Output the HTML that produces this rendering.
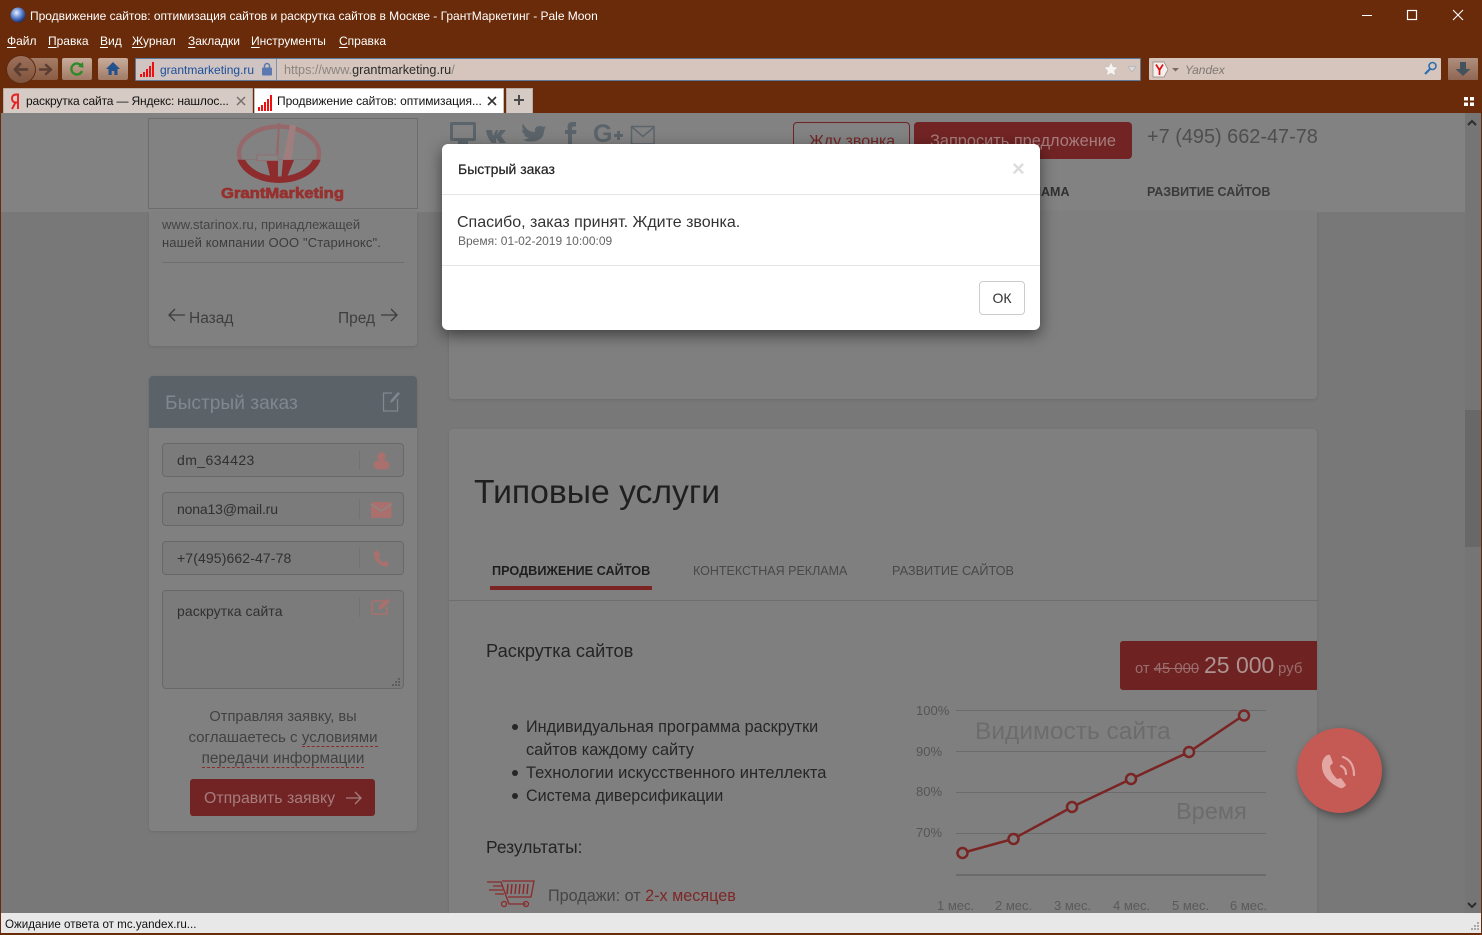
<!DOCTYPE html>
<html lang="ru"><head><meta charset="utf-8"><title>Продвижение сайтов</title>
<style>
*{box-sizing:border-box}
html,body{margin:0;padding:0;width:1482px;height:934px;overflow:hidden;background:#692b09;font-family:"Liberation Sans","Noto Sans CJK JP",sans-serif}
.a{position:absolute}
.t{position:absolute;white-space:nowrap;line-height:20px}
u{text-decoration-thickness:1px;text-underline-offset:2px}
svg{position:absolute;overflow:visible}
</style></head><body>
<!-- chrome -->
<svg style="left:10px;top:7px" width="16" height="16"><defs><radialGradient id="m" cx=".4" cy=".35" r=".7"><stop offset="0" stop-color="#e8f0ff"/><stop offset=".5" stop-color="#5e86d0"/><stop offset="1" stop-color="#12246a"/></radialGradient></defs><circle cx="8" cy="8" r="7.5" fill="url(#m)"/></svg>
<div class="t" style="left:30px;top:6px;font-size:12px;letter-spacing:-.02px;color:#fff">Продвижение сайтов: оптимизация сайтов и раскрутка сайтов в Москве - ГрантМаркетинг - Pale Moon</div>
<svg style="left:1360px;top:8px" width="110" height="16" fill="none" stroke="#fff"><path d="M2 7.5h10" stroke-width="1"/><rect x="47.500" y="2.500" width="9" height="9" stroke-width="1.200"/><path d="M93 2l10 10M103 2l-10 10" stroke-width="1.100"/></svg>
<div class="t" style="left:7px;top:31px;font-size:12px;color:#fff"><u>Ф</u>айл</div>
<div class="t" style="left:48px;top:31px;font-size:12px;color:#fff"><u>П</u>равка</div>
<div class="t" style="left:100px;top:31px;font-size:12px;color:#fff"><u>В</u>ид</div>
<div class="t" style="left:132px;top:31px;font-size:12px;color:#fff"><u>Ж</u>урнал</div>
<div class="t" style="left:188px;top:31px;font-size:12px;color:#fff"><u>З</u>акладки</div>
<div class="t" style="left:251px;top:31px;font-size:12px;color:#fff"><u>И</u>нструменты</div>
<div class="t" style="left:339px;top:31px;font-size:12px;color:#fff"><u>С</u>правка</div>
<!-- nav -->
<div class="a" style="left:30px;top:58px;width:28px;height:22px;background:linear-gradient(#a57c66,#8a5c43);border-radius:0 2px 2px 0"></div>
<div class="a" style="left:6px;top:55px;width:30px;height:29px;border-radius:50%;background:linear-gradient(#9c705a,#80543c);border:1px solid #5c2a10"></div>
<svg style="left:6px;top:55px" width="54" height="29" fill="none" stroke-linecap="round" stroke-linejoin="round"><path d="M21 14.500h-12M14 9l-5 5.500 5 5.500" stroke="#5b3e33" stroke-width="2.800"/><path d="M34 14.500h10M40 10l5 4.500-5 4.500" stroke="#5b3e33" stroke-width="2.500"/></svg>
<div class="a" style="left:62px;top:58px;width:30px;height:22px;background:linear-gradient(#c9ac9c,#a07a64);border-radius:2px"></div>
<svg style="left:69px;top:61px" width="16" height="16" fill="none"><path d="M12.500 5A5.500 5.500 0 1 0 13 10" stroke="#2f8a2c" stroke-width="2.400"/><path d="M9 5.500l5.500 1.500L14 1z" fill="#2f8a2c"/></svg>
<div class="a" style="left:98px;top:58px;width:30px;height:22px;background:linear-gradient(#c9ac9c,#a07a64);border-radius:2px"></div>
<svg style="left:105px;top:61px" width="16" height="16"><path d="M8 1L1 8h2.500v6h3.200v-4h2.600v4h3.200V8H15z" fill="#23528f"/></svg>
<div class="a" style="left:135px;top:58px;width:1006px;height:23px;background:#d5c5bd;border:1px solid #5d7898;border-radius:1px"></div>
<div class="a" style="left:136px;top:59px;width:141px;height:21px;background:#cfc4c2;border-right:1px solid #7a93ae"></div>
<svg style="left:140px;top:61px" width="16" height="17" fill="#ee1010"><rect x="0" y="13" width="2" height="3"/><rect x="3" y="11" width="2" height="5"/><rect x="6" y="8" width="2" height="8"/><rect x="9" y="5" width="2" height="11"/><rect x="12" y="1" width="2" height="15"/></svg>
<div class="t" style="left:160px;top:60px;font-size:12px;color:#1a4f9c">grantmarketing.ru</div>
<svg style="left:261px;top:62px" width="12" height="14"><rect x="1" y="5.500" width="10" height="8" rx="1" fill="#5b78b0"/><path d="M3.500 6V4a2.500 2.500 0 0 1 5 0v2" fill="none" stroke="#5b78b0" stroke-width="1.500"/></svg>
<div class="t" style="left:284px;top:60px;font-size:12.650px;color:#8b8580">https://www.<span style="color:#2a2a2a">grantmarketing.ru</span>/</div>
<svg style="left:1103px;top:61px" width="34" height="16"><path d="M8 1l2.200 4.700 5 .6-3.700 3.400 1 5L8 12.200 3.500 14.700l1-5L.8 6.300l5-.6z" fill="#f6f3f0" stroke="#c8c0ba" stroke-width=".6"/><path d="M25 5.500h8l-4 5.500z" fill="#e2dad6" stroke="#aab5bf" stroke-width=".7"/></svg>
<div class="a" style="left:1149px;top:58px;width:292px;height:22px;background:#d5c5bd;border-radius:1px"></div>
<svg style="left:1153px;top:61px" width="30" height="17"><path d="M0 1h11l4 7.500-4 7.500H0z" fill="#f5f0ee" stroke="#8d8078" stroke-width=".7"/><path d="M3 3.500l3.500 5.500v5M10 3.500L6.500 9" stroke="#e01010" stroke-width="1.700" fill="none"/><path d="M19 7h7l-3.500 3.500z" fill="#756a64"/></svg>
<div class="t" style="left:1185px;top:60px;font-size:12px;font-style:italic;color:#7f7873">Yandex</div>
<svg style="left:1423px;top:61px" width="15" height="15" fill="none" stroke="#2c6fb0"><circle cx="9.500" cy="5" r="3.500" stroke-width="1.600"/><path d="M7 8L2 13" stroke-width="2.200"/></svg>
<div class="a" style="left:1448px;top:58px;width:30px;height:22px;background:linear-gradient(#b08f7e,#8f6652);border-radius:1px"></div>
<svg style="left:1454px;top:61px" width="18" height="17"><path d="M6 1h6v7h4.500L9 15 1.500 8H6z" fill="#44525e"/></svg>
<!-- tabs -->
<div class="a" style="left:3px;top:88px;width:250px;height:25px;background:#d6cac4;border:1px solid #b9aaa2;border-bottom:0;border-radius:1px 1px 0 0"></div>
<svg style="left:10px;top:93px" width="11" height="17" fill="none" stroke="#e82020" stroke-width="1.900"><path d="M8 16V1.500H6Q2 1.500 2 5.500T6 9.500H8M5.500 9.500L2 16"/></svg>
<div class="t" style="left:26px;top:91px;font-size:12px;letter-spacing:-.15px;color:#111">раскрутка сайта — Яндекс: нашлос...</div>
<svg style="left:236px;top:96px" width="10" height="10" stroke="#77706c" stroke-width="1.500"><path d="M1 1l8 8M9 1l-8 8"/></svg>
<div class="a" style="left:254px;top:88px;width:250px;height:26px;background:#fff;border:1px solid #c7bdb8;border-bottom:0;border-radius:1px 1px 0 0"></div>
<svg style="left:258px;top:95px" width="16" height="17" fill="#ee1010"><rect x="0" y="12" width="2" height="4"/><rect x="3" y="10" width="2" height="6"/><rect x="6" y="7" width="2" height="9"/><rect x="9" y="4" width="2" height="12"/><rect x="12" y="0" width="2" height="16"/></svg>
<div class="t" style="left:277px;top:91px;font-size:12px;letter-spacing:-.06px;color:#111">Продвижение сайтов: оптимизация...</div>
<svg style="left:487px;top:96px" width="10" height="10" stroke="#333" stroke-width="1.600"><path d="M1 1l8 8M9 1l-8 8"/></svg>
<div class="a" style="left:506px;top:88px;width:27px;height:25px;background:#d6cac4;border:1px solid #b9aaa2;border-bottom:0"></div>
<svg style="left:513px;top:94px" width="12" height="12" stroke="#4a4a4a" stroke-width="2"><path d="M6 1v10M1 6h10"/></svg>
<svg style="left:1464px;top:97px" width="10" height="10" fill="#fff"><rect x="0" y="0" width="4" height="3.500"/><rect x="6" y="0" width="4" height="3.500"/><rect x="0" y="5.500" width="4" height="3.500"/><rect x="6" y="5.500" width="4" height="3.500"/></svg>

<!-- page -->
<div class="a" style="left:1px;top:113px;width:1480px;height:800px;background:#787878;overflow:hidden">
  <div class="a" style="left:0;top:0;width:1464px;height:99px;background:#828282"></div>
  <div class="a" style="left:448px;top:99px;width:868px;height:187px;background:#7f7f7f;border-radius:0 0 4px 4px;box-shadow:0 1px 3px rgba(0,0,0,.1)"></div>
  <div class="a" style="left:148px;top:99px;width:268px;height:134px;background:#808080;border-radius:0 0 4px 4px;box-shadow:0 1px 3px rgba(0,0,0,.1)"></div>
  <div class="a" style="left:148px;top:263px;width:268px;height:455px;background:#808080;border-radius:4px;box-shadow:0 1px 3px rgba(0,0,0,.1)"></div>
  <div class="a" style="left:448px;top:316px;width:868px;height:484px;background:#7f7f7f;border-radius:4px 4px 0 0;box-shadow:0 1px 3px rgba(0,0,0,.1)"></div>
  <div class="a" style="left:1464px;top:0;width:16px;height:800px;background:#757575"></div>
  <div class="a" style="left:1464px;top:297px;width:16px;height:137px;background:#686868"></div>
</div>
<svg style="left:1466px;top:118px" width="14" height="10" fill="none" stroke="#2c2c2c" stroke-width="2"><path d="M2 7l4-4 4 4"/></svg>
<svg style="left:1466px;top:900px" width="14" height="10" fill="none" stroke="#2c2c2c" stroke-width="2"><path d="M2 3l4 4 4-4"/></svg>

<!-- logo -->
<div class="a" style="left:148px;top:118px;width:270px;height:91px;border:1px solid #6c6c6c"></div>
<svg style="left:148px;top:118px" width="270" height="91">
<defs><clipPath id="top"><rect x="0" y="0" width="270" height="41.700"/></clipPath><clipPath id="bot"><rect x="0" y="41.700" width="270" height="50"/></clipPath></defs>
<ellipse cx="131" cy="35.500" rx="40" ry="27" fill="none" stroke="#96686a" stroke-width="4.500" clip-path="url(#top)"/>
<g clip-path="url(#bot)"><ellipse cx="131" cy="35.500" rx="42.500" ry="29.500" fill="#8e2b2d"/><ellipse cx="131" cy="33" rx="36" ry="25.500" fill="#828282"/></g>
<path d="M130 5l-2 31h2.500l1.500-31z" fill="#96686a"/>
<path d="M109 37h21v5.500H109z" fill="#858585" stroke="#96686a" stroke-width=".8"/>
<path d="M118.500 43H130v20.500l-7-1.500z" fill="#8e2b2d"/>
<path d="M142 6l6 2-4.500 33.700H135z" fill="#a07d7f"/>
<path d="M135 42h11L137 64h-4z" fill="#8e2b2d"/>
<text x="73" y="80" font-family="Liberation Sans" font-size="15" font-weight="bold" fill="#97312f" textLength="123" lengthAdjust="spacingAndGlyphs" stroke="#97312f" stroke-width=".7">GrantMarketing</text>
</svg>
<div class="t" style="left:162px;top:215px;font-size:13px;color:#444">www.starinox.ru, принадлежащей</div>
<div class="t" style="left:162px;top:233px;font-size:13px;letter-spacing:.13px;color:#3c3c3c">нашей компании ООО "Старинокс".</div>
<div class="a" style="left:162px;top:262px;width:242px;height:1px;background:#6e6e6e"></div>
<svg style="left:168px;top:306px" width="230" height="18" fill="none" stroke="#3c3c3c" stroke-width="1.300"><path d="M17 9H1M7 3L1 9l6 6"/><path d="M213 9h16M223 3l6 6-6 6"/></svg>
<div class="t" style="left:189px;top:309px;font-size:15.500px;color:#3e3e3e">Назад</div>
<div class="t" style="left:338px;top:309px;font-size:15.500px;color:#3e3e3e">Пред</div>

<!-- quick form -->
<div class="a" style="left:149px;top:376px;width:268px;height:52px;background:#5b6369;border-radius:4px 4px 0 0"></div>
<div class="t" style="left:165px;top:394px;font-size:19.200px;color:#7e888e">Быстрый заказ</div>
<svg style="left:382px;top:391px" width="18" height="21" fill="none" stroke="#80898f" stroke-width="1.300"><path d="M10 2H1.500v18h14V8"/><path d="M8 12l1-3 7-8 2 1.500-7 8z" fill="#80898f" stroke="none"/></svg>
<div class="a" style="left:162px;top:443px;width:242px;height:34px;background:#7b7b7b;border:1px solid #686868;border-radius:4px"></div>
<div class="a" style="left:162px;top:492px;width:242px;height:34px;background:#7b7b7b;border:1px solid #686868;border-radius:4px"></div>
<div class="a" style="left:162px;top:541px;width:242px;height:34px;background:#7b7b7b;border:1px solid #686868;border-radius:4px"></div>
<div class="a" style="left:162px;top:590px;width:242px;height:99px;background:#7b7b7b;border:1px solid #686868;border-radius:4px"></div>
<div class="a" style="left:359px;top:450px;width:1px;height:20px;background:#727272"></div>
<div class="a" style="left:359px;top:499px;width:1px;height:20px;background:#727272"></div>
<div class="a" style="left:359px;top:548px;width:1px;height:20px;background:#727272"></div>
<div class="a" style="left:359px;top:597px;width:1px;height:20px;background:#727272"></div>
<div class="t" style="left:177px;top:450px;font-size:14px;letter-spacing:.42px;color:#303030">dm_634423</div>
<div class="t" style="left:177px;top:499px;font-size:14px;letter-spacing:-.15px;color:#303030">nona13@mail.ru</div>
<div class="t" style="left:177px;top:548px;font-size:14px;letter-spacing:.12px;color:#303030">+7(495)662-47-78</div>
<div class="t" style="left:177px;top:601px;font-size:14px;letter-spacing:.07px;color:#303030">раскрутка сайта</div>
<svg style="left:373px;top:452px" width="17" height="18" fill="#aa706d"><circle cx="8.500" cy="4.500" r="4.300"/><rect x="0.500" y="8.500" width="16" height="9" rx="4.500"/></svg>
<svg style="left:371px;top:502px" width="21" height="16"><rect x="0" y="0" width="20.500" height="16" rx="1.500" fill="#aa706d"/><path d="M0 2l10.200 7L20.500 2" fill="none" stroke="#8a8a8a" stroke-width="1.300"/></svg>
<svg style="left:373px;top:550px" width="17" height="17"><path d="M1 3.500Q1 1.500 3 .700l1.500-.500 3 5-2 2q1.500 3.500 5 5.300l2-2 3.700 3.500q-1.500 3-4.500 2.500Q1 13 1 3.500z" fill="#aa706d"/></svg>
<svg style="left:371px;top:598px" width="21" height="18" fill="none" stroke="#aa706d" stroke-width="1.600"><path d="M13 3H3Q1 3 1 5v9q0 2 2 2h11q2 0 2-2V9"/><path d="M7 11l1-3 8-7.500 3 3L11 11z" fill="#aa706d" stroke="none"/></svg>
<svg style="left:392px;top:678px" width="10" height="9" fill="#5e5e5e"><rect x="6" y="0" width="2" height="2"/><rect x="3" y="3" width="2" height="2"/><rect x="6" y="3" width="2" height="2"/><rect x="0" y="6" width="2" height="2"/><rect x="3" y="6" width="2" height="2"/><rect x="6" y="6" width="2" height="2"/></svg>
<div class="t" style="left:149px;top:707px;width:268px;text-align:center;font-size:14.600px;color:#414141">Отправляя заявку, вы</div>
<div class="t" style="left:149px;top:728px;width:268px;text-align:center;font-size:15.100px;color:#414141">соглашаетесь с <span style="border-bottom:1px dashed #8a2a2a">условиями</span></div>
<div class="t" style="left:149px;top:749px;width:268px;text-align:center;font-size:15.300px;color:#414141"><span style="border-bottom:1px dashed #8a2a2a">передачи информации</span></div>
<div class="a" style="left:190px;top:779px;width:185px;height:37px;background:#722424;border-radius:3px"></div>
<div class="t" style="left:204px;top:789px;font-size:15.850px;color:#a67c7c">Отправить заявку</div>
<svg style="left:345px;top:790px" width="18" height="16" fill="none" stroke="#a67c7c" stroke-width="1.300"><path d="M1 8h15M10 2l6 6-6 6"/></svg>

<!-- header right -->
<svg style="left:450px;top:122px" width="205" height="24" fill="#5b646a">
<path d="M2 0h22q2 0 2 2v15q0 2-2 2H2q-2 0-2-2V2q0-2 2-2zM3 3v13h20V3z" fill-rule="evenodd"/><rect x="8" y="19" width="10" height="5"/>
<path d="M36 8h6l1 6 3-6h2l-1 5 3-5h6l-5 6 5 7h-6l-4-5v5h-4q-5-5-6-13z"/>
<path d="M73 9q3 4 9 4-1-6 5-6 2 0 3 1l3-1-2 3 2-.500-2 2q0 11-14 11-4 0-7-2 4 0 6-2-4 0-5-3h2q-4-1-4-5l2 .500q-3-3-1-6 z" transform="translate(3,-3)"/>
<path d="M118 9h-3v4h3v11h4V13h4l.500-4H122V7q0-1.500 2-1.500h2V1h-4q-4.500 0-4.500 5z" transform="translate(0,-1)"/>
<text x="143" y="20" font-family="Liberation Sans" font-size="25" font-weight="bold">G</text>
<path d="M167 9h3v3h3v3h-3v3h-3v-3h-3v-3h3z"/>
<path d="M181.500 4.500h22.500v17.500h-22.500z M182 5l11 9.500 11-9.500" fill="none" stroke="#5b646a" stroke-width="1.500"/>
</svg>
<div class="a" style="left:793px;top:122px;width:117px;height:37px;border:1px solid #722424;border-radius:4px"></div>
<div class="t" style="left:809px;top:132px;font-size:16px;color:#722424">Жду звонка</div>
<div class="a" style="left:914px;top:122px;width:218px;height:37px;background:#722424;border-radius:4px"></div>
<div class="t" style="left:930px;top:131px;font-size:16.350px;color:#a67c7c">Запросить предложение</div>
<div class="t" style="left:1147px;top:127px;font-size:19.900px;color:#4e4e4e">+7 (495) 662-47-78</div>
<div class="t" style="left:1032px;top:181.500px;font-size:12.500px;color:#303030;font-weight:bold">НАМА</div>
<div class="t" style="left:1147px;top:181.500px;font-size:12.500px;color:#3a3a3a;font-weight:bold">РАЗВИТИЕ САЙТОВ</div>

<!-- services -->
<div class="t" style="left:474px;top:473px;font-size:33.700px;line-height:38px;color:#1f1f1f">Типовые услуги</div>
<div class="t" style="left:492px;top:560.500px;font-size:12.700px;color:#1f1f1f;font-weight:bold">ПРОДВИЖЕНИЕ САЙТОВ</div>
<div class="t" style="left:693px;top:560.500px;font-size:12.500px;color:#484848">КОНТЕКСТНАЯ РЕКЛАМА</div>
<div class="t" style="left:892px;top:560.500px;font-size:12.700px;color:#484848">РАЗВИТИЕ САЙТОВ</div>
<div class="a" style="left:490px;top:586px;width:162px;height:4px;background:#7a2424"></div>
<div class="a" style="left:449px;top:600px;width:868px;height:1px;background:#6e6e6e"></div>
<div class="t" style="left:486px;top:641px;font-size:18.250px;color:#242424">Раскрутка сайтов</div>
<div class="a" style="left:512px;top:724px;width:6px;height:6px;background:#262626;border-radius:50%"></div>
<div class="a" style="left:512px;top:770px;width:6px;height:6px;background:#262626;border-radius:50%"></div>
<div class="a" style="left:512px;top:793px;width:6px;height:6px;background:#262626;border-radius:50%"></div>
<div class="t" style="left:526px;top:717px;font-size:16.200px;color:#262626">Индивидуальная программа раскрутки</div>
<div class="t" style="left:526px;top:740px;font-size:16.300px;color:#262626">сайтов каждому сайту</div>
<div class="t" style="left:526px;top:763px;font-size:16.500px;color:#262626">Технологии искусственного интеллекта</div>
<div class="t" style="left:526px;top:786px;font-size:16.150px;color:#262626">Система диверсификации</div>
<div class="t" style="left:486px;top:837px;font-size:17.400px;color:#242424">Результаты:</div>
<svg style="left:485px;top:876px" width="50" height="31" fill="none" stroke="#8a2a2a" stroke-width="1.300"><path d="M2 6h14l8 22h17M8 10h9M4 14h14M10 18h9"/><path d="M17 5h32l-3 16H23"/><path d="M23 8l-1 10M27 8l-1 10M31 8l-1 10M35 8l-1 10M39 8l-1 10M43 8l-1 10" stroke-width="1.500"/><circle cx="19" cy="28" r="2.500"/><circle cx="41" cy="28" r="2.500"/></svg>
<div class="t" style="left:548px;top:886px;font-size:16.200px;color:#454545">Продажи: от <span style="color:#7d2727">2-х месяцев</span></div>

<!-- price -->
<div class="a" style="left:1120px;top:641px;width:197px;height:49px;background:#6e2221;border-radius:3px 0 0 3px"></div>
<div class="t" style="left:1135px;top:659px;font-size:14.800px;color:#9a6e6e">от <s>45 000</s></div>
<div class="t" style="left:1204px;top:655px;font-size:23px;color:#ad9292">25 000</div>
<div class="t" style="left:1278px;top:659px;font-size:15px;color:#9a6e6e">руб</div>

<!-- chart -->
<svg style="left:0;top:0" width="1482" height="934" fill="none">
<g stroke="#6b6b6b"><path d="M956 710.500h310M956 751.500h310M956 792.500h310M956 833.500h310"/><path d="M956 875h310" stroke-width="2"/></g>
<polyline points="962,853 1013,839 1072,807 1131,779 1189,752 1244,715" stroke="#7a2424" stroke-width="2.500"/>
<g stroke="#7a2424" stroke-width="2.500" fill="#7f7f7f"><circle cx="962.500" cy="853" r="5"/><circle cx="1013.500" cy="839" r="5"/><circle cx="1072" cy="807" r="5"/><circle cx="1131" cy="779" r="5"/><circle cx="1189" cy="752" r="5"/><circle cx="1244" cy="715.500" r="5"/></g>
</svg>
<div class="t" style="left:916px;top:701px;font-size:13px;color:#555">100%</div>
<div class="t" style="left:916px;top:742px;font-size:13px;color:#555">90%</div>
<div class="t" style="left:916px;top:782px;font-size:13px;color:#555">80%</div>
<div class="t" style="left:916px;top:823px;font-size:13px;color:#555">70%</div>
<div class="t" style="left:975px;top:722px;font-size:24.500px;color:#6c6c6c">Видимость сайта</div>
<div class="t" style="left:1176px;top:801px;font-size:23.500px;color:#6c6c6c">Время</div>
<div class="t" style="left:937px;top:896px;font-size:13px;color:#5a5a5a">1 мес.</div>
<div class="t" style="left:995px;top:896px;font-size:13px;color:#5a5a5a">2 мес.</div>
<div class="t" style="left:1054px;top:896px;font-size:13px;color:#5a5a5a">3 мес.</div>
<div class="t" style="left:1113px;top:896px;font-size:13px;color:#5a5a5a">4 мес.</div>
<div class="t" style="left:1172px;top:896px;font-size:13px;color:#5a5a5a">5 мес.</div>
<div class="t" style="left:1230px;top:896px;font-size:13px;color:#5a5a5a">6 мес.</div>

<!-- call button -->
<div class="a" style="left:1297px;top:728px;width:85px;height:85px;border-radius:50%;background:#c55a55;box-shadow:2px 3px 8px rgba(0,0,0,.4)"></div>
<svg style="left:1320px;top:751px" width="42" height="42" fill="#e3a6a2"><path d="M4 7q3-4 6-3l3 8-3 3q0 6 7 13l4-1 5 7q-3 4-6 3Q1 28 2 13q0-3 2-6z"/><path d="M21 15q5 2 5 8M23 6q11 4 11 18" fill="none" stroke="#e3a6a2" stroke-width="2.200" stroke-linecap="round"/></svg>

<!-- modal -->
<div class="a" style="left:442px;top:144px;width:598px;height:186px;background:#fff;border-radius:6px;box-shadow:0 5px 15px rgba(0,0,0,.5)"></div>
<div class="a" style="left:442px;top:194px;width:598px;height:1px;background:#e5e5e5"></div>
<div class="a" style="left:442px;top:265px;width:598px;height:1px;background:#e5e5e5"></div>
<div class="t" style="left:458px;top:159px;font-size:14px;color:#222;-webkit-text-stroke:.2px #222">Быстрый заказ</div>
<div class="t" style="left:1012px;top:159px;font-size:22px;font-weight:bold;color:#dcdcdc">×</div>
<div class="t" style="left:457px;top:213px;font-size:16px;color:#333">Спасибо, заказ принят. Ждите звонка.</div>
<div class="t" style="left:458px;top:231px;font-size:12px;color:#666">Время: 01-02-2019 10:00:09</div>
<div class="a" style="left:979px;top:281px;width:46px;height:34px;background:#fff;border:1px solid #ccc;border-radius:4px;color:#333;font-size:14px;line-height:32px;text-align:center">ОК</div>

<!-- status bar -->
<div class="a" style="left:1px;top:913px;width:1480px;height:20px;background:#e8e8e8"></div>
<div class="t" style="left:5px;top:915px;font-size:11.600px;color:#111">Ожидание ответа от mc.yandex.ru...</div>
<svg style="left:1470px;top:921px" width="10" height="10" fill="#a8a8a8"><rect x="7" y="1" width="2" height="2"/><rect x="4" y="4" width="2" height="2"/><rect x="7" y="4" width="2" height="2"/><rect x="1" y="7" width="2" height="2"/><rect x="4" y="7" width="2" height="2"/><rect x="7" y="7" width="2" height="2"/></svg>
</body></html>
